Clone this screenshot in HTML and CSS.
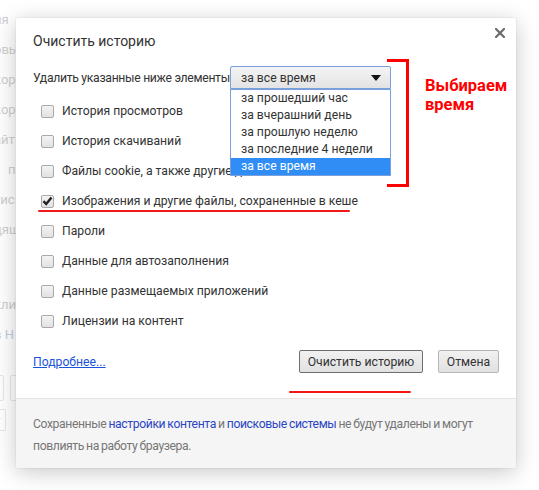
FILE: index.html
```html
<!DOCTYPE html>
<html lang="ru">
<head>
<meta charset="utf-8">
<title>Очистить историю</title>
<link rel="stylesheet" href="styles.css">
</head>
<body>
<div class="backdrop">
  <div class="bg-col">
    <div class="bg-line">ия</div>
    <div class="bg-line">овь</div>
    <div class="bg-line">кор</div>
    <div class="bg-line">кор</div>
    <div class="bg-line">айт</div>
    <div class="bg-line ind">пр</div>
    <div class="bg-line">тис</div>
    <div class="bg-line">дящ</div>
    <div class="bg-gap"></div>
    <div class="bg-line">кли</div>
    <div class="bg-line blue">в Н</div>
    <div class="bg-gap2"></div>
    <div class="bg-boxes"><span class="bg-box"></span><span class="bg-box"></span></div>
    <div class="bg-select"><span class="bg-arrow"></span></div>
  </div>
</div>

<div class="dialog">
  <div class="close">
    <svg width="10" height="10" viewBox="0 0 10 10"><path d="M1 1L9 9M9 1L1 9" stroke="#6b6b6b" stroke-width="2.2" stroke-linecap="square"/></svg>
  </div>
  <div class="content">
    <h1 class="title">Очистить историю</h1>
    <div class="range-row">
      <span class="range-label">Удалить указанные ниже элементы</span>
      <div class="select">
        <span>за все время</span>
        <span class="arrow"></span>
      </div>
    </div>
    <div class="options">
      <label class="opt"><span class="cb"></span>История просмотров</label>
      <label class="opt"><span class="cb"></span>История скачиваний</label>
      <label class="opt"><span class="cb"></span>Файлы cookie, а также другие данные сайтов и плагинов</label>
      <label class="opt"><span class="cb checked"><svg width="11" height="10" viewBox="0 0 11 10"><path d="M1.5 5.2L4.2 8L9.5 1.5" fill="none" stroke="#222" stroke-width="2.4"/></svg></span>Изображения и другие файлы, сохраненные в кеше</label>
      <label class="opt"><span class="cb"></span>Пароли</label>
      <label class="opt"><span class="cb"></span>Данные для автозаполнения</label>
      <label class="opt"><span class="cb"></span>Данные размещаемых приложений</label>
      <label class="opt"><span class="cb"></span>Лицензии на контент</label>
    </div>
    <div class="actions">
      <a class="more" href="#">Подробнее...</a>
      <div class="buttons">
        <button class="btn primary">Очистить историю</button>
        <button class="btn cancel">Отмена</button>
      </div>
    </div>
  </div>
  <div class="footer">
    <p class="footer-text">Сохраненные <a href="#">настройки контента</a> и <a href="#">поисковые системы</a> не будут удалены и могут повлиять на работу браузера.</p>
  </div>

  <ul class="dropdown">
    <li>за прошедший час</li>
    <li>за вчерашний день</li>
    <li>за прошлую неделю</li>
    <li>за последние 4 недели</li>
    <li class="sel">за все время</li>
  </ul>
  <div class="bracket"></div>
  <div class="note">Выбираем<br>время</div>
  <div class="mark mark-row"></div>
  <div class="mark mark-btn"></div>
</div>
</body>
</html>
```

FILE: styles.css
```css
html, body {
  margin: 0;
  padding: 0;
  background: #fff;
}
body {
  width: 539px;
  height: 490px;
  overflow: hidden;
  position: relative;
  font-family: Roboto, "Open Sans", sans-serif;
  color: #333;
}

/* faded page behind the dialog */
.backdrop {
  padding: 10px 0 0 0;
}
.bg-col {
  display: flex;
  flex-direction: column;
  margin-left: -6px;
  font-size: 13px;
  color: #cfcfcf;
}
.bg-line {
  height: 30px;
  line-height: 20px;
}
.bg-line.ind { padding-left: 14px; }
.bg-line.blue { color: #c4cbe4; }
.bg-gap { height: 45px; }
.bg-gap2 { height: 20px; }
.bg-boxes {
  display: flex;
  gap: 6px;
  margin-left: -8px;
}
.bg-box {
  width: 16px;
  height: 24px;
  border: 1px solid #e6e6e6;
  border-radius: 2px;
}
.bg-select {
  margin-top: 8px;
  margin-left: -10px;
  width: 20px;
  height: 20px;
  border: 1px solid #e6e6e6;
  position: relative;
}
.bg-arrow {
  position: absolute;
  right: 4px;
  top: 8px;
  border: 4px solid transparent;
  border-top: 5px solid #d6d6d6;
}

/* dialog */
.dialog {
  position: absolute;
  left: 16px;
  top: 18px;
  width: 500px;
  height: 450px;
  background: #fff;
  border-radius: 2px;
  box-shadow: 0 4px 22px rgba(0, 0, 0, 0.22), 0 0 2px rgba(0, 0, 0, 0.12);
  display: flex;
  flex-direction: column;
}
.close {
  position: absolute;
  right: 11px;
  top: 10px;
  width: 10px;
  height: 10px;
}
.close svg { display: block; }

.content {
  padding: 0 17px;
  flex: 1;
  display: flex;
  flex-direction: column;
}
.title {
  margin: 13px 0 0 0;
  font-size: 14px;
  font-weight: normal;
  line-height: 20px;
  color: #333;
}
.range-row {
  margin-top: 15px;
  display: flex;
  align-items: center;
  height: 23px;
  font-size: 12.2px;
}
.range-label {
  flex: 0 0 197px;
  min-width: 0;
  white-space: nowrap;
  letter-spacing: -0.3px;
}
.select {
  box-sizing: border-box;
  width: 161px;
  height: 23px;
  border: 1px solid #7aa0dc;
  border-radius: 2px 2px 0 0;
  background: linear-gradient(#f4f4f4, #e3e3e3);
  display: flex;
  align-items: center;
  justify-content: space-between;
  padding: 0 9px 0 10px;
  color: #333;
}
.arrow {
  width: 0;
  height: 0;
  border-left: 5px solid transparent;
  border-right: 5px solid transparent;
  border-top: 6px solid #111;
  margin-top: 1px;
}

.options {
  margin-top: 7px;
  display: flex;
  flex-direction: column;
}
.opt {
  height: 30px;
  display: flex;
  align-items: center;
  font-size: 12.2px;
  padding-left: 8px;
  white-space: nowrap;
}
.cb {
  box-sizing: border-box;
  width: 13px;
  height: 13px;
  border: 1px solid #a9a9a9;
  border-radius: 2px;
  background: linear-gradient(#f3f3f3, #e2e2e2);
  margin-right: 8px;
  display: flex;
  align-items: center;
  justify-content: center;
  flex: none;
}
.cb svg { display: block; margin-top: -1px; }

.actions {
  margin-top: 14px;
  display: flex;
  align-items: center;
  justify-content: space-between;
  height: 23px;
}
.more {
  font-size: 12.2px;
  color: #1a53d8;
  text-decoration: underline;
}
.buttons {
  display: flex;
  gap: 15px;
}
.btn {
  box-sizing: border-box;
  height: 23px;
  padding: 0;
  font-family: inherit;
  font-size: 12.2px;
  color: #333;
  background: linear-gradient(#f1f1f1, #e1e1e1);
  border: 1px solid #b6b6b6;
  border-radius: 2px;
  white-space: nowrap;
}
.btn.primary {
  border-color: #6e6e6e;
  width: 124px;
}
.btn.cancel { width: 61px; }

.footer {
  height: 70px;
  box-sizing: border-box;
  background: #f5f5f5;
  border-top: 1px solid #e4e4e4;
  padding: 14px 4px 0 17px;
  border-radius: 0 0 2px 2px;
}
.footer-text {
  margin: 0;
  font-size: 12.2px;
  line-height: 22px;
  letter-spacing: -0.4px;
  word-spacing: -0.5px;
  color: #777;
}
.footer-text a {
  color: #2b46c4;
  text-decoration: none;
}

/* open dropdown list */
.dropdown {
  position: absolute;
  left: 214px;
  top: 71px;
  width: 161px;
  box-sizing: border-box;
  margin: 0;
  padding: 0;
  list-style: none;
  border: 1px solid #7aa0dc;
  background: #fff;
  font-size: 12.2px;
}
.dropdown li {
  height: 17px;
  line-height: 17px;
  padding-left: 10px;
  color: #333;
}
.dropdown li.sel {
  background: #2f8df5;
  color: #fff;
}

/* annotations */
.bracket {
  position: absolute;
  left: 371px;
  top: 41px;
  width: 19px;
  height: 122px;
  border: 3px solid #f00;
  border-left: none;
}
.note {
  position: absolute;
  left: 409px;
  top: 58px;
  color: #f00;
  font-weight: bold;
  font-size: 16.5px;
  line-height: 19px;
}
.mark {
  position: absolute;
  height: 2px;
  background: #f21818;
  border-radius: 1px;
}
.mark-row {
  left: 22px;
  top: 192px;
  width: 312px;
}
.mark-btn {
  left: 273px;
  top: 373px;
  width: 122px;
}
```
